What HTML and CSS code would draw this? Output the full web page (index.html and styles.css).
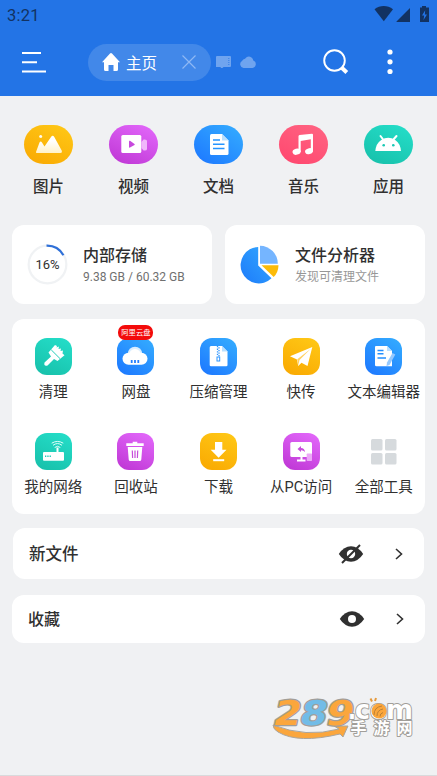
FILE: index.html
```html
<!DOCTYPE html>
<html lang="zh-CN">
<head>
<meta charset="utf-8">
<title>主页</title>
<link rel="stylesheet" href="styles.css">
</head>
<body>
<svg class="defs" width="0" height="0" aria-hidden="true">
  <defs>
    <linearGradient id="fade" x1="0" y1="0" x2="0" y2="1"><stop offset=".3" stop-color="#fff"/><stop offset="1" stop-color="#fff2c8"/></linearGradient>
    <linearGradient id="pie" x1="1" y1="0" x2="0" y2="1"><stop offset="0" stop-color="#33a8ff"/><stop offset="1" stop-color="#1d7bfa"/></linearGradient>
  </defs>
</svg>
<header class="top">
  <div class="status">
    <span class="clock">3:21</span>
    <svg class="status-icons" viewBox="0 0 56 18" fill="#123262">
      <path d="M0.5 4.2C6-.1 13.500-.1 19 4.200L9.800 16.200Z"/>
      <path d="M22.500 17V16.500L36 3V17Z"/>
      <path d="M48 1h4v1.500h3V17h-9V2.500h2Z"/>
      <path d="M51.200 5.200L48 10.500h2.200L49.500 15l3.500-5.500h-2.200Z" fill="#2374e6"/>
    </svg>
  </div>
  <nav class="bar">
    <svg class="menu" viewBox="0 0 24 22" stroke="#fff" stroke-width="2"><path d="M0 2h19M0 11.300h15M0 20.500h24"/></svg>
    <div class="tab">
      <svg class="home" viewBox="0 0 18 18" fill="#fff"><path d="M9 0Q9.600 0 10 .5L18 9.200H16V16.500Q16 18 14.500 18H11.500V12H6.500V18H3.500Q2 18 2 16.500V9.200H0L8 .5Q8.400 0 9 0Z"/></svg>
      <span>主页</span>
      <svg class="close" viewBox="0 0 14 14" stroke="#8fb8f4" stroke-width="1.200"><path d="M.5.500l13 13M13.500.500l-13 13"/></svg>
    </div>
    <svg class="mini" viewBox="0 0 40 12" fill="#6fa4ef">
      <path d="M1 0h13q1 0 1 1v9q0 1-1 1H7.500l-1 1H5l-.5-1H0V1q0-1 1-1Z"/>
      <path d="M12.800 2v8" stroke="#2374e6" stroke-width=".8" stroke-dasharray="1 1"/>
      <path d="M27.500 12a3.800 3.800 0 0 1-1.500-7Q27 3 29 2.800Q32-1 35.500 1.500Q37 2.500 37.300 4.500A3.900 3.900 0 0 1 36.500 12Z"/>
    </svg>
    <svg class="search" viewBox="0 0 26 26" fill="none" stroke="#fff"><circle cx="11.500" cy="11.500" r="10.300" stroke-width="1.900"/><path d="M18.500 18.500l5.300 5" stroke-width="4"/></svg>
    <svg class="more" viewBox="0 0 6 26" fill="#fff"><circle cx="3" cy="3" r="2.600"/><circle cx="3" cy="12.800" r="2.600"/><circle cx="3" cy="22.500" r="2.600"/></svg>
  </nav>
</header>

<main>
  <section class="categories">
    <div class="category"><div class="blob yellow"><svg viewBox="0 0 49 39" fill="url(#fade)"><path d="M12 27L15.500 17.500Q16.700 15.300 18 17.500L20.500 21.500L27 12Q28.700 9.500 30.300 12L37.700 25.500Q38.500 28 36.300 28H13Q11.500 28 12 27Z"/><circle cx="16.700" cy="11.600" r="1.500"/></svg></div><span>图片</span></div>
    <div class="category"><div class="blob purple"><svg viewBox="0 0 49 39"><path d="M32.500 17l2-2.500q3.500-.5 3.500 1.500v8q0 2-3.500 1.500l-2-2.500Z" fill="#f1b8fb"/><rect x="12.300" y="10" width="20" height="18" rx="1.500" fill="#fff"/><path d="M20 16.300q0-1 1-.5l4.500 3.200q.5.500 0 1L21 22.500q-1 .5-1-.5Z" fill="#c749dd"/></svg></div><span>视频</span></div>
    <div class="category"><div class="blob blue"><svg viewBox="0 0 49 39"><path d="M17.500 9H28l6.500 6.500V28.500q0 1.500-1.500 1.500H17.500Q16 30 16 28.500V10.500Q16 9 17.500 9Z" fill="#fff"/><path d="M28 9v6.500h6.500Z" fill="#b9dfff"/><path d="M19 15h7M19 19.300h11.500M19 23.500h11.500" stroke="#2494ff" stroke-width="1.600"/></svg></div><span>文档</span></div>
    <div class="category"><div class="blob pink"><svg viewBox="0 0 49 39" fill="#fff"><path d="M19.500 11.200q0-1 1-1.200L33 8.800q1 0 1 1V26.500h-2.200V14.200L21.700 16v11h-2.200Z"/><ellipse cx="17.600" cy="26.700" rx="4.100" ry="3" transform="rotate(-15 17.600 26.700)"/><ellipse cx="30" cy="26.200" rx="4" ry="2.900" transform="rotate(-15 30 26.200)"/></svg></div><span>音乐</span></div>
    <div class="category"><div class="blob green"><svg viewBox="0 0 49 39" fill="#fff"><path d="M11.300 26Q12 18.500 17.200 15Q24.200 10.500 31.200 15Q36.300 18.500 37 26Z"/><path d="M16.500 11l3 4M32.500 11l-3.500 4" stroke="#fff" stroke-width="2" stroke-linecap="round"/><circle cx="19.700" cy="20.300" r="1.300" fill="#1ac9b4"/><circle cx="29.300" cy="20.300" r="1.300" fill="#1ac9b4"/></svg></div><span>应用</span></div>
  </section>

  <section class="summary">
    <article class="card storage">
      <div class="ring"><svg viewBox="0 0 42 42" fill="none" stroke-width="2.300"><circle cx="21" cy="21" r="19.300" stroke="#f0f2f4"/><path d="M20 1.700A19.300 19.300 0 0 1 37.300 11.500" stroke="#2f70d8"/></svg><span>16%</span></div>
      <div class="info"><h2>内部存储</h2><p>9.38 GB / 60.32 GB</p></div>
    </article>
    <article class="card analyzer">
      <svg class="pie" viewBox="0 0 39 39"><path d="M18.200 2V20.500L31.500 33.200A18.200 18.200 0 1 1 18.200 2Z" fill="url(#pie)"/><path d="M20 .8A17.800 17.800 0 0 1 37.800 18.700H20Z" fill="#75b5ff"/><path d="M21.500 20.200H38.500Q38.200 27.500 33.700 32Z" fill="#fcbb09"/></svg>
      <div class="info"><h2>文件分析器</h2><p>发现可清理文件</p></div>
    </article>
  </section>

  <section class="card tools">
    <div class="tool"><div class="tile green"><svg viewBox="0 0 37 37"><path d="M20 7l2 1-.5 1.500 2.500-1-.5 2.500 2.500-.5-.5 2.500 2.500-.5-.5 3 2 1.700L22.500 23 19 21l-6.500 6.500Q8.500 28.500 9.500 24.500L16 18.500 13.500 14.500Z" fill="#fff"/><path d="M16.200 11.800l8.800 8.800" stroke="#24cdb9"/></svg></div><span>清理</span></div>
    <div class="tool"><div class="tile blue"><svg viewBox="0 0 37 37"><circle cx="18" cy="16" r="7.300" fill="#d8edff"/><rect x="5.500" y="14.700" width="25" height="12" rx="6" fill="#fff"/><circle cx="18" cy="17" r="6" fill="#fff"/><path d="M14.700 22v3M18 22v3M21.300 22v3" stroke="#247fff" stroke-width="1.800"/></svg></div><b class="badge">阿里云盘</b><span>网盘</span></div>
    <div class="tool"><div class="tile blue"><svg viewBox="0 0 37 37"><path d="M11 8h11l5.500 5.500V27q0 1.300-1.300 1.300H11Q9.700 28.300 9.700 27V9.500Q9.700 8 11 8Z" fill="#fff"/><path d="M22 8v5.500h5.500Z" fill="#b9dfff"/><path d="M17.500 8v10" stroke="#2f96ff" stroke-width="1.300" stroke-dasharray="1.300 1.300"/><path d="M19 9.300v9" stroke="#2f96ff" stroke-width="1.300" stroke-dasharray="1.300 1.300"/><rect x="17" y="19" width="2.700" height="4" fill="none" stroke="#2f96ff"/></svg></div><span>压缩管理</span></div>
    <div class="tool"><div class="tile yellow"><svg viewBox="0 0 37 37"><path d="M29.300 9L24.500 28 18.500 24.800 15.200 28 14 21.500 7 18.300Z" fill="#fff"/><path d="M27.500 11L14.300 21.300 15.200 27.500 16.500 22Z" fill="#ffd265"/></svg></div><span>快传</span></div>
    <div class="tool"><div class="tile blue"><svg viewBox="0 0 37 37"><path d="M11 8h11l5 5V28.300H11.500Q10 28.300 10 27V9Q10 8 11 8Z" fill="#fff"/><path d="M22 8v5h5Z" fill="#b9dfff"/><path d="M12.500 12.500h6M12.500 15.800h6M12.500 20h8.500" stroke="#2490ff" stroke-width="1.500"/><path d="M27.500 15l2.800 1.500L24.500 27l-3 1 .5-3.500Z" fill="#94c9ff"/></svg></div><span>文本编辑器</span></div>
    <div class="tool"><div class="tile green"><svg viewBox="0 0 37 37"><rect x="8" y="19" width="21" height="8.800" rx="1" fill="#fff"/><path d="M22.500 14.500V20" stroke="#fff" stroke-width="2"/><path d="M19.700 14.500q2.800-2.500 5.600 0M18 12.300q4.500-3.500 9 0M16.700 10.200q5.800-3.500 11.600 0" fill="none" stroke="#e2fffb" stroke-width="1"/><path d="M10 23.300h6" stroke="#20cbb7" stroke-width="1.500" stroke-dasharray="1.300 1"/></svg></div><span>我的网络</span></div>
    <div class="tool"><div class="tile purple"><svg viewBox="0 0 37 37"><path d="M15.700 10.300V8.800h4.600v1.500h6.400V13H9.300v-2.700ZM10.700 14h14.600L24.300 26.500q-.2 1.500-1.500 1.500h-9.600q-1.300 0-1.500-1.500Z" fill="#fff"/><path d="M15.300 17.500l.3 7.500M18 17.500V25M20.700 17.500l-.3 7.500" stroke="#c64dda" stroke-width="1.200"/></svg></div><span>回收站</span></div>
    <div class="tool"><div class="tile yellow"><svg viewBox="0 0 37 37" fill="#fff"><path d="M15 9h7.300v7.800H26.500L18.600 24.800 10.700 16.800H15Z"/><rect x="13.200" y="26.200" width="11" height="2"/></svg></div><span>下载</span></div>
    <div class="tool"><div class="tile purple"><svg viewBox="0 0 37 37"><rect x="7.300" y="9" width="21.700" height="15" rx="1.500" fill="#fff"/><path d="M18.500 24v4M14 27.500h8.500" stroke="#fff" stroke-width="2"/><rect x="23.700" y="20.500" width="5.300" height="7.500" rx=".7" fill="#eca8f7"/><path d="M14.500 16l3.500-3v2q3.500 0 4 4-2-2-4-1.700V19Z" fill="#c74edc"/></svg></div><span>从PC访问</span></div>
    <div class="tool"><div class="tile"><svg viewBox="0 0 37 37" fill="#d6dadd"><rect x="6" y="6" width="11.500" height="11.500" rx="1.500"/><rect x="20" y="6" width="11.500" height="11.500" rx="1.500"/><rect x="6" y="20" width="11.500" height="11.500" rx="1.500"/><rect x="20" y="20" width="11.500" height="11.500" rx="1.500"/></svg></div><span>全部工具</span></div>
  </section>

  <section class="card row new">
    <h2>新文件</h2>
    <svg class="eye" viewBox="0 0 26 22"><path d="M.8 11Q6 3.300 13 3.300T25.200 11Q20 18.700 13 18.700T.8 11Z" fill="#303030"/><circle cx="13" cy="11" r="4.200" fill="#fff"/><path d="M4 20L22 2" stroke="#303030" stroke-width="2"/></svg>
    <svg class="arrow" viewBox="0 0 8 12"><path d="M1 1l5.500 5L1 11" fill="none" stroke="#303030" stroke-width="1.600"/></svg>
  </section>
  <section class="card row favorites">
    <h2>收藏</h2>
    <svg class="eye" viewBox="0 0 26 22"><path d="M.8 11Q6 3.300 13 3.300T25.200 11Q20 18.700 13 18.700T.8 11Z" fill="#303030"/><circle cx="13" cy="11" r="4" fill="#fff"/></svg>
    <svg class="arrow" viewBox="0 0 8 12"><path d="M1 1l5.500 5L1 11" fill="none" stroke="#303030" stroke-width="1.600"/></svg>
  </section>
</main>

<footer>
  <svg class="brand" viewBox="-8 -14 160 60" stroke-linejoin="round">
    <path d="M1 27Q34 40 67 31L62 28H76L71 39L68 36Q26 46 6 34Q1 31 1 27Z" fill="#fba63c" stroke="#aaa59d"/>
    <g class="brand-num" transform="translate(4.500 0) skewX(-12)">
      <text x="1" y="26.500" textLength="27.500" lengthAdjust="spacingAndGlyphs" fill="#fba63c">2</text>
      <text x="27.500" y="26.500" textLength="27" lengthAdjust="spacingAndGlyphs" fill="#71bce7">8</text>
      <text x="53.500" y="26.500" textLength="27.500" lengthAdjust="spacingAndGlyphs" fill="#fba63c">9</text>
    </g>
    <g class="brand-com">
      <text x="76" y="21" textLength="8" lengthAdjust="spacingAndGlyphs">.</text>
      <text x="83" y="21" textLength="15" lengthAdjust="spacingAndGlyphs">c</text>
      <text x="98" y="21" textLength="17" lengthAdjust="spacingAndGlyphs">o</text>
      <text x="114" y="21" textLength="27" lengthAdjust="spacingAndGlyphs">m</text>
    </g>
    <circle cx="107" cy="13" r="7.500" fill="#fba63c"/>
    <path d="M102 17q0-8 8-9M105 18q0-6 6-7M108 18.500q0-3 3-4" fill="none" stroke="#b17c35" stroke-width=".9"/>
    <path d="M100 3.500l-1.500-3M103 3l1-3" fill="none" stroke="#e59a3c" stroke-width="2"/>
    <text class="brand-cn" x="78.500" y="36" textLength="62">手游网</text>
  </svg>
</footer>
</body>
</html>
```
FILE: styles.css
```css
* { box-sizing: border-box; }
body {
  margin: 0;
  min-height: 776px;
  display: flex;
  flex-direction: column;
  background: #f0f1f3;
  color: #303030;
  font-family: Roboto, "Noto Sans CJK SC", sans-serif;
}
svg { display: block; flex: none; }
.defs { position: absolute; }
h2, p { margin: 0; white-space: nowrap; }
h2 { font-size: 16px; line-height: 22px; font-weight: 500; }

.top { height: 96px; background: #2374e6; }
.status { height: 30px; padding: 0 7px; display: flex; align-items: center; justify-content: space-between; }
.clock { color: #123262; font-size: 16.500px; letter-spacing: .2px; }
.status-icons { width: 56px; height: 18px; margin-top: -2px; }
.bar { height: 64px; display: flex; align-items: center; padding-left: 22px; }
.menu { width: 24px; height: 22px; }
.tab {
  width: 123px; height: 37px; margin-left: 42px; padding-left: 14px;
  display: flex; align-items: center;
  border-radius: 19px; background: #4288e9;
  color: #fff; font-size: 15.500px;
}
.home { width: 18px; height: 18px; margin-right: 6px; }
.close { width: 14px; height: 14px; margin-left: 25px; }
.mini { width: 40px; height: 12px; margin-left: 5px; }
.search { width: 26px; height: 26px; margin-left: 67px; }
.more { width: 6px; height: 26px; margin-left: 37.500px; }

main { display: flex; flex-direction: column; padding: 29px 12px 0; }
.categories { display: flex; height: 100px; margin: 0 -6px; }
.category { flex: 1; display: flex; flex-direction: column; align-items: center; font-size: 15.500px; font-weight: 500; line-height: 22px; gap: 12px; }
.blob { width: 49px; height: 39px; border-radius: 20px; }
.blob svg { width: 49px; height: 39px; }
.yellow { background: linear-gradient(25deg, #f9a801, #ffc917); }
.purple { background: linear-gradient(25deg, #bd35d3, #e46afc); }
.blue { background: linear-gradient(35deg, #1c76ff, #35aeff); }
.pink { background: linear-gradient(25deg, #ff466e, #ff6583); }
.green { background: linear-gradient(25deg, #17bfa9, #25dfca); }

.card { background: #fff; border-radius: 12px; }
.summary { display: grid; grid-template-columns: 200px 200px; gap: 13px; }
.summary .card { height: 79px; display: flex; align-items: center; }
.storage { padding-left: 15px; }
.ring { width: 41px; height: 41px; display: grid; place-items: center; }
.ring > * { grid-area: 1 / 1; }
.ring svg { width: 41px; height: 41px; }
.ring span { font-size: 13px; }
.info { margin-left: 15px; padding-top: 3px; }
.info p { color: #707070; font-size: 12px; line-height: 20px; }
.analyzer { padding-left: 15px; }
.analyzer .info p { color: #979797; }
.pie { width: 39px; height: 39px; }
.analyzer .info { margin-left: 16px; }

.tools { height: 195px; margin-top: 15px; padding-top: 18px; display: grid; grid-template-columns: repeat(5, 1fr); grid-template-rows: 94.500px 94.500px; }
.tool { position: relative; display: flex; flex-direction: column; align-items: center; gap: 7px; font-size: 14.500px; line-height: 22px; white-space: nowrap; }
.tile { width: 37px; height: 37px; margin-top: 1px; border-radius: 12px; }
.tile svg { width: 37px; height: 37px; }
.badge { position: absolute; top: -12px; width: 35px; height: 15px; border-radius: 7px; background: #f30b0b; color: #fff; font-size: 7.300px; line-height: 15px; font-weight: 400; text-align: center; }

.row { display: flex; align-items: center; padding: 0 21px 0 16px; }
.row h2 { flex: 1; padding-top: 2px; }
.eye { width: 26px; height: 22px; }
.arrow { width: 8px; height: 12px; margin-left: 31px; }
.new { height: 51px; margin: 14px 1px 0; }
.new h2 { font-size: 16.500px; }
.favorites { height: 48px; margin-top: 16px; }

footer { flex: 1; display: flex; justify-content: flex-end; padding: 41px 13px 0 0; border-bottom: 1px solid #d9dadc; }
.brand { width: 160px; height: 60px; }
.brand text { stroke: #a19e99; stroke-width: 2px; paint-order: stroke; font-weight: 700; }
.brand .brand-num text { stroke-width: 2.500px; }
.brand-num { font-family: "DejaVu Sans", sans-serif; font-size: 34px; }
.brand-com { font-family: "DejaVu Sans", sans-serif; font-size: 27px; fill: #fff; }
.brand .brand-cn { font-family: "Noto Sans CJK SC", sans-serif; font-size: 16px; fill: #fff; }
```
